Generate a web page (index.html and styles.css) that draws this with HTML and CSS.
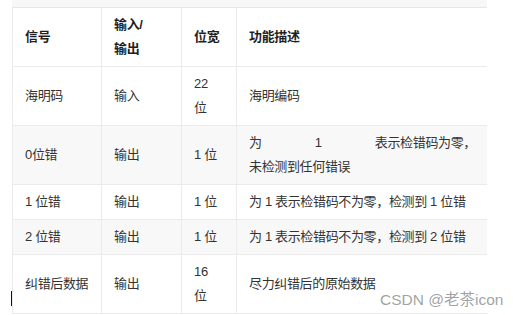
FILE: index.html
```html
<!DOCTYPE html>
<html lang="zh">
<head>
<meta charset="utf-8">
<link rel="stylesheet" href="styles.css">
</head>
<body>
<div class="page">
  <div class="strip"></div>
  <table class="sig">
    <colgroup>
      <col class="c1"><col class="c2"><col class="c3"><col class="c4">
    </colgroup>
    <thead>
      <tr><th>信号</th><th>输入/<br>输出</th><th>位宽</th><th>功能描述</th></tr>
    </thead>
    <tbody>
      <tr><td>海明码</td><td>输入</td><td>22<br>位</td><td>海明编码</td></tr>
      <tr class="alt"><td>0位错</td><td>输出</td><td>1 位</td><td><span class="jline"><span>为</span><span>1</span><span>表示检错码为零，</span></span>未检测到任何错误</td></tr>
      <tr><td>1 位错</td><td>输出</td><td>1 位</td><td>为 1 表示检错码不为零，检测到 1 位错</td></tr>
      <tr class="alt"><td>2 位错</td><td>输出</td><td>1 位</td><td>为 1 表示检错码不为零，检测到 2 位错</td></tr>
      <tr><td>纠错后数据</td><td>输出</td><td>16<br>位</td><td>尽力纠错后的原始数据</td></tr>
    </tbody>
  </table>
  <div class="caret"></div>
  <div class="mark">CSDN @老茶icon</div>
</div>
</body>
</html>
```
FILE: styles.css
```css
html, body {
  margin: 0;
  padding: 0;
  background: #ffffff;
}
.page {
  position: relative;
  width: 516px;
  height: 315px;
  overflow: hidden;
  font-family: "Liberation Sans", "Noto Sans CJK SC", sans-serif;
  font-size: 13px;
  letter-spacing: -0.35px;
  color: #333333;
}
.strip {
  margin-left: 12px;
  width: 475px;
  height: 7px;
  background: #f7f7f7;
  border-bottom: 1px solid #e6e6e6;
}
.sig {
  margin-left: 12px;
  border-collapse: separate;
  border-spacing: 0;
  table-layout: fixed;
  width: 475px;
  border-left: 1px solid #ebebeb;
}
.c1 { width: 89px; }
.c2 { width: 80px; }
.c3 { width: 55px; }
.c4 { width: 250px; }
.sig th, .sig td {
  padding: 5px 11px 5px 12px;
  line-height: 24px;
  text-align: left;
  vertical-align: middle;
  white-space: normal;
  border-bottom: 1px solid #ebebeb;
  border-right: 1px solid #ebebeb;
}
.sig th:last-child, .sig td:last-child {
  border-right: none;
}
.sig th {
  font-weight: bold;
  color: #1f1f1f;
}
.sig tr.alt td {
  background: #f8f8f8;
}
.jline {
  display: flex;
  justify-content: space-between;
}
.caret {
  position: absolute;
  left: 11px;
  top: 291px;
  width: 1px;
  height: 15px;
  background: #111111;
}
.mark {
  position: absolute;
  left: 380px;
  top: 287px;
  font-size: 15.5px;
  letter-spacing: 0;
  color: rgba(125, 125, 125, 0.72);
  white-space: nowrap;
}
```
